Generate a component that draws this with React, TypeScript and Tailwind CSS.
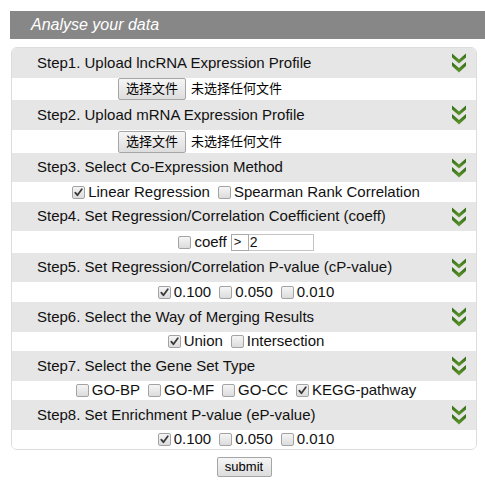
import React from "react";

const font = { fontFamily: '"Liberation Sans", Arial, sans-serif' };
const cjk = { fontFamily: '"Liberation Sans", Arial, "Noto Sans CJK SC", sans-serif' };

function Chevron() {
  return (
    <svg width="14" height="20" viewBox="0 0 14 20" className="shrink-0">
      <defs>
        <linearGradient id="chev" x1="0" y1="0" x2="0" y2="1">
          <stop offset="0" stopColor="#2f6a14" />
          <stop offset="1" stopColor="#649a32" />
        </linearGradient>
      </defs>
      <polygon points="0,0.5 7,6.5 14,0.5 14,4.5 7,10.5 0,4.5" fill="url(#chev)" />
      <polygon points="0,9 7,15 14,9 14,13 7,19.5 0,13" fill="url(#chev)" />
    </svg>
  );
}

function Box({ checked }: { checked?: boolean }) {
  return (
    <span className="relative inline-block w-[13px] h-[13px] ml-[4px] mr-[3px] rounded-[2px] border border-[#a3a3a3] bg-linear-to-b from-[#f5f5f5] to-[#dcdcdc] shrink-0">
      {checked && (
        <svg width="11" height="11" viewBox="0 0 11 11" className="absolute left-0 top-0">
          <path d="M2.3 5.6 L4.4 8.2 L8.8 2.3" stroke="#3a3a3a" strokeWidth="1.8" fill="none" strokeLinecap="round" strokeLinejoin="round" />
        </svg>
      )}
    </span>
  );
}

function Step({ title, h }: { title: string; h: string }) {
  return (
    <div className={`${h} bg-[#e6e6e6] flex items-center justify-between pl-[25px] pr-[10px] text-[15px] text-[#111]`}>
      <span>{title}</span>
      <Chevron />
    </div>
  );
}

function Opt({ label, checked }: { label: string; checked?: boolean }) {
  return (
    <span className="flex items-center">
      <Box checked={checked} />
      <span>{label}</span>
    </span>
  );
}

function CheckRow({ h, items }: { h: string; items: { label: string; checked?: boolean }[] }) {
  return (
    <div className={`${h} bg-white flex items-center justify-center gap-[4px] text-[15px] text-[#111]`}>
      {items.map((it) => (
        <Opt key={it.label} label={it.label} checked={it.checked} />
      ))}
    </div>
  );
}

function FileRow({ h }: { h: string }) {
  return (
    <div className={`${h} bg-white flex items-center justify-center`}>
      <div className="w-[252px] flex items-center gap-[5px] text-[13px] text-black" style={cjk}>
        <span className="h-[22px] w-[68px] flex items-center justify-center rounded-[2px] border border-[#a6a6a6] bg-linear-to-b from-[#f6f6f6] to-[#dddddd]">
          选择文件
        </span>
        <span>未选择任何文件</span>
      </div>
    </div>
  );
}

export default function App() {
  return (
    <div className="w-[485px] h-[484px] bg-white overflow-hidden pt-[11px] pl-[10px]" style={font}>
      <div className="h-[28px] bg-[#878787] flex items-center pl-[21px] text-white italic text-[16px]">
        Analyse your data
      </div>
      <div className="mt-[8px] ml-[1px] w-[466px] border border-[#dcdcdc] rounded-[6px] overflow-hidden">
        <Step title="Step1. Upload lncRNA Expression Profile" h="h-[30px]" />
        <FileRow h="h-[22px]" />
        <Step title="Step2. Upload mRNA Expression Profile" h="h-[30px]" />
        <FileRow h="h-[23px]" />
        <Step title="Step3. Select Co-Expression Method" h="h-[29px]" />
        <CheckRow h="h-[20px]" items={[{ label: "Linear Regression", checked: true }, { label: "Spearman Rank Correlation" }]} />
        <Step title="Step4. Set Regression/Correlation Coefficient (coeff)" h="h-[29px]" />
        <div className="h-[22px] bg-white flex items-center justify-center text-[15px] text-[#111]">
          <Box />
          <span className="mr-[4px]">coeff</span>
          <span className="h-[17px] w-[18px] border border-[#a9a9a9] flex items-center pl-[2px] text-[13px]">&gt;</span>
          <span className="h-[17px] w-[65px] border border-[#c4c4c4] border-l-0 flex items-center pl-[1px] text-[14px]">2</span>
        </div>
        <Step title="Step5. Set Regression/Correlation P-value (cP-value)" h="h-[29px]" />
        <CheckRow h="h-[20px]" items={[{ label: "0.100", checked: true }, { label: "0.050" }, { label: "0.010" }]} />
        <Step title="Step6. Select the Way of Merging Results" h="h-[30px]" />
        <CheckRow h="h-[19px]" items={[{ label: "Union", checked: true }, { label: "Intersection" }]} />
        <Step title="Step7. Select the Gene Set Type" h="h-[30px]" />
        <CheckRow h="h-[19px]" items={[{ label: "GO-BP" }, { label: "GO-MF" }, { label: "GO-CC" }, { label: "KEGG-pathway", checked: true }]} />
        <Step title="Step8. Set Enrichment P-value (eP-value)" h="h-[30px]" />
        <CheckRow h="h-[19px]" items={[{ label: "0.100", checked: true }, { label: "0.050" }, { label: "0.010" }]} />
      </div>
      <div className="mt-[7px] ml-[1px] w-[466px] flex justify-center">
        <span className="h-[20px] w-[55px] flex items-center justify-center rounded-[2px] border border-[#a6a6a6] bg-linear-to-b from-[#f6f6f6] to-[#dddddd] text-[13px] text-black">
          submit
        </span>
      </div>
    </div>
  );
}
